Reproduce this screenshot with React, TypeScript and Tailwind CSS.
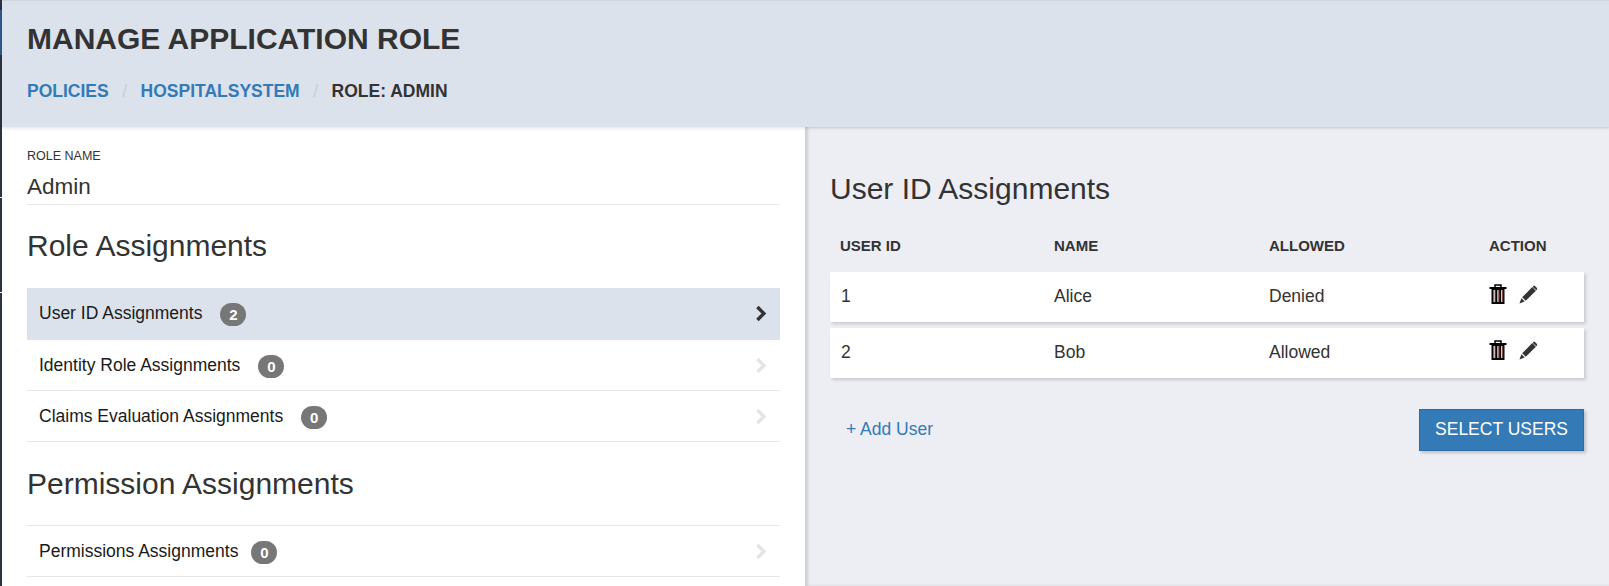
const fontStack = "font-['Liberation_Sans',Arial,sans-serif]";

type Assignment = { label: string; count: number; active?: boolean; tight?: boolean };

const roleAssignments: Assignment[] = [
  { label: "User ID Assignments", count: 2, active: true },
  { label: "Identity Role Assignments", count: 0 },
  { label: "Claims Evaluation Assignments", count: 0 },
];

const users = [
  { id: "1", name: "Alice", allowed: "Denied" },
  { id: "2", name: "Bob", allowed: "Allowed" },
];

function TrashIcon() {
  return (
    <svg width="18" height="20" viewBox="0 0 18 20" className="shrink-0">
      <path d="M6 3V1h6V3" fill="none" stroke="#000" strokeWidth="1.5" />
      <rect x="0.5" y="3" width="17" height="2" fill="#000" />
      <path d="M2.5 5h13v15h-13z" fill="#000" />
      <path d="M4.5 6h1.4v12H4.5zM8.3 6h1.4v12H8.3zM12.1 6h1.4v12h-1.4z" fill="#f0e4e4" />
      <path d="M5.9 6h1v12h-1zM9.7 6h1v12h-1zM13.5 6h.8v12h-.8z" fill="#8a1c1c" />
    </svg>
  );
}

function PencilIcon() {
  return (
    <svg width="19" height="19" viewBox="0 0 18 18" className="shrink-0">
      <path d="M3 11.6L12.6 2l3.4 3.4L6.4 15z" fill="#333" />
      <path d="M13.4 1.2c.6-.6 1.4-.6 2 0l1.4 1.4c.6.6.6 1.4 0 2l-.4.4L13 1.6z" fill="#333" />
      <path d="M2.3 12.6l3.1 3.1L0.4 17.6z" fill="#333" />
    </svg>
  );
}

function Chevron({ active }: { active?: boolean }) {
  return (
    <svg width="12" height="17" viewBox="0 0 12 17" className="shrink-0">
      <path d="M2.4 2L8.9 8.5l-6.5 6.5" fill="none" stroke={active ? "#333333" : "#e4e4e4"} strokeWidth="3.4" />
    </svg>
  );
}

function AssignmentRow({ label, count, active, tight }: Assignment) {
  return (
    <div className={`flex items-center justify-between border-b pl-3 pr-[13px] ${active ? "h-[52px] border-[#dce2ec] bg-[#dce2ec]" : "h-[51px] border-[#e7e7e7] bg-white"}`}>
      <div className="flex items-center text-[17.5px] text-[#1a1a1a]">
        {label}
        <span className={`${tight ? "ml-[13px]" : "ml-[18px]"} mt-[2px] flex h-[23px] min-w-[26px] items-center justify-center rounded-full bg-[#777] px-[8px] text-[15px] font-bold leading-none text-white`}>
          {count}
        </span>
      </div>
      <Chevron active={active} />
    </div>
  );
}

export default function App() {
  return (
    <div className={`flex h-[586px] w-[1609px] overflow-hidden bg-white text-[#333] ${fontStack}`}>
      {/* sliver of the window behind */}
      <div className="flex w-[2px] shrink-0 flex-col bg-[#2d3340]">
        <div className="mt-[10px] h-[45px] bg-[#2f5a8a]" />
        <div className="mt-[142px] h-px bg-white" />
        <div className="mt-[94px] h-px bg-white" />
      </div>
      <div className="flex min-w-0 flex-1 flex-col">
        {/* header */}
        <div className="relative z-10 h-[127px] shrink-0 border-t border-[#cfd4de] bg-[#dce2ec] pl-[25px] pt-[20px] shadow-[0_1px_4px_rgba(0,0,0,0.12)]">
          <h1 className="text-[30px] font-bold leading-[36px]">MANAGE APPLICATION ROLE</h1>
          <div className="mt-[23px] flex items-center text-[17.5px] font-bold leading-[22px]">
            <span className="text-[#337ab7]">POLICIES</span>
            <span className="px-[13.5px] font-normal text-[#ccc]">/</span>
            <span className="text-[#337ab7]">HOSPITALSYSTEM</span>
            <span className="px-[13.5px] font-normal text-[#ccc]">/</span>
            <span>ROLE: ADMIN</span>
          </div>
        </div>

        <div className="flex min-h-0 flex-1">
          {/* left column */}
          <div className="w-[803px] shrink-0 px-[25px] pt-[21px]">
            <div className="text-[12.5px] leading-[17px]">ROLE NAME</div>
            <div className="h-[40px] border-b border-[#e7e7e7] pt-[8px] text-[22.5px] leading-[28px]">Admin</div>
            <h2 className="mb-[24px] mt-[23px] text-[30px] leading-[36px]">Role Assignments</h2>
            {roleAssignments.map((a) => (
              <AssignmentRow key={a.label} {...a} />
            ))}
            <h2 className="mb-[23px] mt-[24px] text-[30px] leading-[36px]">Permission Assignments</h2>
            <div className="border-t border-[#e7e7e7]">
              <AssignmentRow label="Permissions Assignments" count={0} tight />
            </div>
          </div>

          {/* right column */}
          <div className="flex-1 bg-[#eceef4] pl-[25px] pr-[25px] pt-[44px] shadow-[inset_3px_0_3px_rgba(0,0,0,0.13)]">
            <h2 className="text-[30px] leading-[36px]">User ID Assignments</h2>
            <div className="mt-[20px] grid h-[38px] grid-cols-[214px_215px_220px_1fr] items-center pl-[10px] text-[15px] font-bold">
              <span>USER ID</span>
              <span>NAME</span>
              <span>ALLOWED</span>
              <span>ACTION</span>
            </div>
            <div className="mt-[7px] flex flex-col gap-[6px]">
              {users.map((u) => (
                <div key={u.id} className="grid h-[50px] grid-cols-[213px_215px_220px_1fr] items-center bg-white pb-[2px] pl-[11px] text-[17.5px] shadow-[2px_2px_3px_rgba(0,0,0,0.15)]">
                  <span>{u.id}</span>
                  <span>{u.name}</span>
                  <span>{u.allowed}</span>
                  <span className="-mt-[4px] flex items-center gap-[12px]">
                    <TrashIcon />
                    <PencilIcon />
                  </span>
                </div>
              ))}
            </div>
            <div className="mt-[31px] flex items-center justify-between pl-[16px]">
              <span className="pb-[2px] text-[17.5px] text-[#337ab7]">+ Add User</span>
              <button className="h-[42px] w-[165px] border border-[#2e6da4] bg-[#337ab7] pb-[2px] text-[17.5px] text-white shadow-[2px_2px_3px_rgba(0,0,0,0.2)]">
                SELECT USERS
              </button>
            </div>
          </div>
        </div>
      </div>
    </div>
  );
}
